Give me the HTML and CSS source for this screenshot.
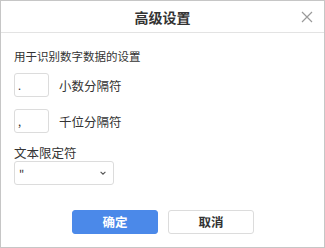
FILE: index.html
```html
<!DOCTYPE html>
<html>
<head>
<meta charset="utf-8">
<link rel="stylesheet" href="styles.css">
</head>
<body>
<div class="dialog">
  <div class="header">
    <span class="title">高级设置</span>
    <svg class="close" width="12" height="12" viewBox="0 0 12 12"><path d="M1 1L11 11M11 1L1 11" stroke="#9a9a9a" stroke-width="1.2" fill="none"/></svg>
  </div>
  <div class="body">
    <div class="hint">用于识别数字数据的设置</div>
    <div class="row first">
      <div class="input">.</div>
      <span class="label">小数分隔符</span>
    </div>
    <div class="row">
      <div class="input">,</div>
      <span class="label">千位分隔符</span>
    </div>
    <div class="field-label">文本限定符</div>
    <div class="select">
      <span class="value">"</span>
      <svg class="chev" width="6" height="4" viewBox="0 0 6 4"><path d="M0.6 0.8L3 3.2L5.4 0.8" stroke="#555" stroke-width="1.1" fill="none"/></svg>
    </div>
  </div>
  <div class="footer">
    <button class="btn primary">确定</button>
    <button class="btn">取消</button>
  </div>
</div>
</body>
</html>
```
FILE: styles.css
```css
html, body {
  margin: 0;
  padding: 0;
  background: #fff;
}
body {
  font-family: "Noto Sans CJK SC", "Noto Sans", sans-serif;
  color: #333;
}
.dialog {
  width: 325px;
  height: 248px;
  box-sizing: border-box;
  border: 1px solid #c6c6c6;
  background: #fff;
  display: flex;
  flex-direction: column;
}
.header {
  height: 31px;
  border-bottom: 1px solid #e3e3e3;
  display: flex;
  align-items: center;
  justify-content: center;
  position: relative;
}
.title {
  font-size: 14px;
  font-weight: 700;
  color: #333;
  line-height: 20px;
}
.close {
  position: absolute;
  right: 11px;
  top: 10px;
}
.body {
  padding: 0 13px;
  display: flex;
  flex-direction: column;
}
.hint {
  margin-top: 15px;
  font-size: 11.5px;
  line-height: 16px;
  color: #333;
}
.row {
  display: flex;
  align-items: center;
  margin-top: 12px;
}
.row.first {
  margin-top: 9px;
}
.input {
  width: 35px;
  height: 24px;
  box-sizing: border-box;
  border: 1px solid #dcdcdc;
  border-radius: 3px;
  font-size: 11px;
  line-height: 22px;
  padding-left: 3px;
  color: #333;
}
.label {
  margin-left: 10px;
  font-size: 12.5px;
  line-height: 16px;
  padding-top: 2px;
}
.field-label {
  margin-top: 12px;
  font-size: 12.5px;
  line-height: 16px;
}
.select {
  width: 100px;
  height: 24px;
  box-sizing: border-box;
  border: 1px solid #dcdcdc;
  border-radius: 3px;
  display: flex;
  align-items: center;
  justify-content: space-between;
  padding: 0 7px 0 4px;
}
.value {
  font-size: 11px;
  line-height: 22px;
}
.footer {
  display: flex;
  gap: 10px;
  padding-left: 71px;
  margin-top: 25px;
}
.btn {
  width: 86px;
  height: 24px;
  box-sizing: border-box;
  border: 1px solid #dcdcdc;
  border-radius: 3px;
  background: #fff;
  font-family: "Noto Sans CJK SC", "Noto Sans", sans-serif;
  font-size: 12.5px;
  font-weight: 700;
  color: #333;
  padding: 0;
  line-height: 22px;
}
.btn.primary {
  background: #4b89e9;
  border-color: #4b89e9;
  color: #fff;
}
```
